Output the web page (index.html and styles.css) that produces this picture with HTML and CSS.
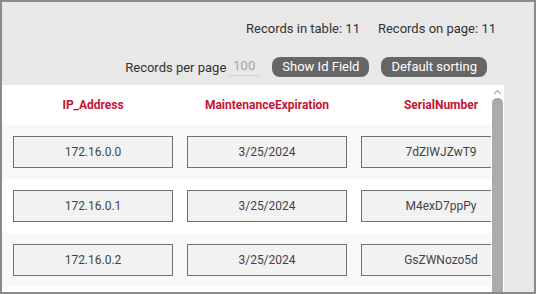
FILE: index.html
```html
<!DOCTYPE html>
<html lang="en">
<head>
    <meta charset="UTF-8">
    <meta name="viewport" content="width=device-width, initial-scale=1.0">
    <title>Records</title>
    <link rel="stylesheet" href="styles.css">
</head>
<body>
    <div class="window">
        <div class="toolbar">
            <div class="counts">
                <span>Records in table: 11</span>
                <span>Records on page: 11</span>
            </div>
            <div class="controls">
                <label for="perPage">Records per page</label>
                <input type="text" id="perPage" class="per-page" placeholder="100">
                <button type="button" class="pill">Show Id Field</button>
                <button type="button" class="pill">Default sorting</button>
            </div>
        </div>

        <div class="grid-area">
            <div class="table-view">
                <div class="row head">
                    <div class="col">IP_Address</div>
                    <div class="col">MaintenanceExpiration</div>
                    <div class="col">SerialNumber</div>
                </div>
                <div class="row odd">
                    <div class="cell">172.16.0.0</div>
                    <div class="cell">3/25/2024</div>
                    <div class="cell">7dZIWJZwT9</div>
                </div>
                <div class="row">
                    <div class="cell">172.16.0.1</div>
                    <div class="cell">3/25/2024</div>
                    <div class="cell">M4exD7ppPy</div>
                </div>
                <div class="row odd">
                    <div class="cell">172.16.0.2</div>
                    <div class="cell">3/25/2024</div>
                    <div class="cell">GsZWNozo5d</div>
                </div>
            </div>
            <div class="scrollbar">
                <svg class="arrow" width="9" height="6" viewBox="0 0 9 6"><path d="M1 5 L4.5 1.5 L8 5" fill="none" stroke="#b5b5b5" stroke-width="1.4"/></svg>
                <div class="thumb"></div>
            </div>
            <div class="gutter"></div>
        </div>
    </div>
</body>
</html>
```

FILE: styles.css
```css
body {
    margin: 0;
    font-family: Roboto, "Liberation Sans", sans-serif;
    color: #333;
}
.window {
    width: 536px;
    height: 294px;
    box-sizing: border-box;
    border: 2px solid #8a8a8a;
    background-color: #e8e8e8;
    display: flex;
    flex-direction: column;
    overflow: hidden;
}
.toolbar {
    height: 83px;
    flex-shrink: 0;
    box-sizing: border-box;
    padding-top: 18px;
}
.counts {
    display: flex;
    justify-content: flex-end;
    gap: 18px;
    padding-right: 38px;
    font-size: 13px;
    height: 18px;
    line-height: 18px;
}
.controls {
    display: flex;
    justify-content: flex-end;
    align-items: center;
    padding-right: 47px;
    margin-top: 19px;
    height: 20px;
    font-size: 13px;
}
.controls label {
    margin-right: 3px;
}
.per-page {
    width: 30px;
    box-sizing: border-box;
    border: none;
    border-bottom: 1px solid #cfcfcf;
    background: transparent;
    font-family: inherit;
    font-size: 13px;
    padding: 0 0 2px 4px;
    margin-right: 13px;
    outline: none;
}
.per-page::placeholder {
    color: #a5a5a5;
}
.pill {
    background-color: #666;
    color: #fff;
    border: none;
    border-radius: 8px;
    font-family: inherit;
    font-size: 13px;
    height: 20px;
    padding: 0 10px;
    margin-left: 12px;
    line-height: 20px;
}
.pill:first-of-type {
    margin-left: 0;
}
.grid-area {
    flex: 1;
    display: flex;
    min-height: 0;
}
.table-view {
    width: 489px;
    flex-shrink: 0;
    background: #fff;
    overflow: hidden;
}
.row {
    display: flex;
    gap: 14px;
    padding: 11px 0 11px 11px;
    width: max-content;
}
.row.odd {
    background-color: #f8f8f8;
    width: 478px;
}
.row.head {
    padding: 11px 0 11px 11px;
    height: 18px;
}
.col {
    width: 160px;
    flex-shrink: 0;
    text-align: center;
    color: #c41432;
    font-weight: 700;
    font-size: 12px;
    line-height: 18px;
}
.cell {
    width: 160px;
    height: 32px;
    flex-shrink: 0;
    box-sizing: border-box;
    border: 1px solid #707070;
    background-color: #f2f2f2;
    font-size: 12px;
    color: #444;
    text-align: center;
    line-height: 30px;
}
.scrollbar {
    width: 13px;
    flex-shrink: 0;
    background: #fff;
    display: flex;
    flex-direction: column;
    align-items: center;
}
.arrow {
    margin-top: 4px;
    margin-bottom: 3px;
}
.thumb {
    flex: 1;
    width: 11px;
    background-color: #ababab;
    border-radius: 5px 5px 0 0;
}
.gutter {
    flex: 1;
    background-color: #e8e8e8;
}
```
